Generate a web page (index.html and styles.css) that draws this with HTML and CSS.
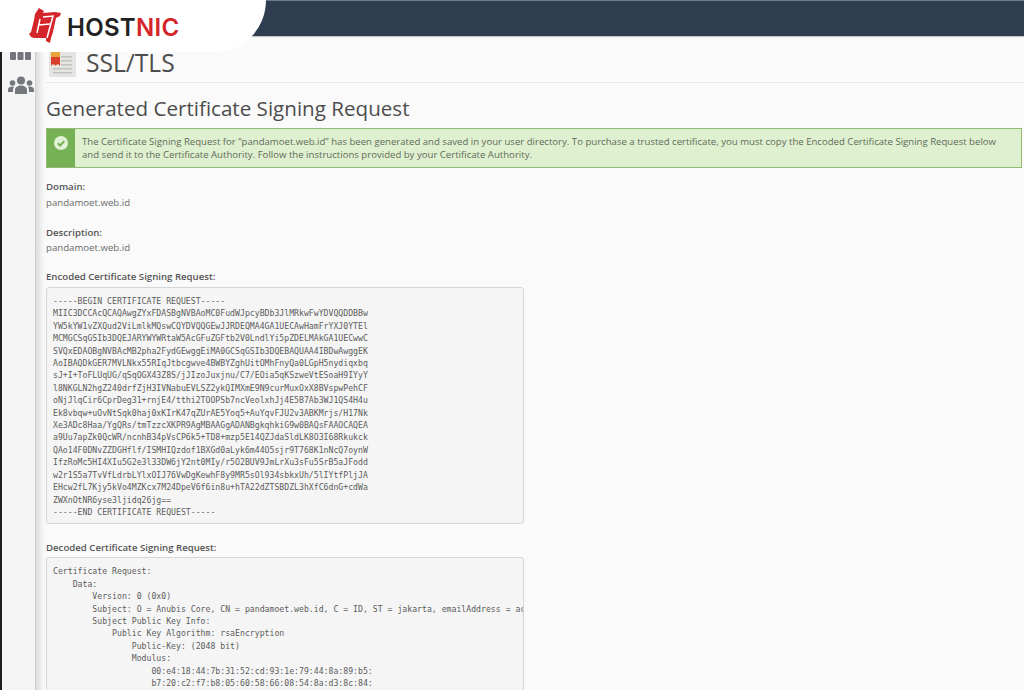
FILE: index.html
```html
<!DOCTYPE html>
<html lang="en">
<head>
<meta charset="utf-8">
<title>SSL/TLS</title>
<link rel="stylesheet" href="styles.css">
</head>
<body>
<header class="topbar">
  <div class="logo-tab">
    <svg class="logo-mark" width="34" height="35" viewBox="0 0 34 35" aria-hidden="true">
      <path fill="#d4262a" d="M10 0l5 3-1 2 12-1 6 1-1 3-4 2-3 14-2 6-1 5-4-2 0-3-12 0-3-1-2-3 2-2 3-12 1-6z"/>
      <g fill="none" stroke="#fff" stroke-width="1.500">
        <path d="M11 11l-3 14"/>
        <path d="M10 17l11-1"/>
        <path d="M14 9l10-1-6 22"/>
      </g>
    </svg>
    <span class="logo-text">HOST<span class="logo-accent">NIC</span></span>
  </div>
</header>
<div class="layout">
  <aside class="rail">
    <div class="rail-strip"></div>
    <div class="rail-icons">
      <svg width="21" height="9" viewBox="0 0 21 9" aria-hidden="true"><g fill="#74787c"><rect x="0" y="0" width="6" height="8" rx="1"/><rect x="7.500" y="0" width="6" height="8" rx="1"/><rect x="15" y="0" width="6" height="8" rx="1"/></g></svg>
      <svg width="26" height="18" viewBox="0 0 26 18" aria-hidden="true"><g fill="#74787c"><circle cx="13" cy="4.500" r="4"/><path d="M7 18v-4c0-3 3-4.500 6-4.500s6 1.500 6 4.500v4z"/><circle cx="4.500" cy="7" r="2.800"/><path d="M0 16v-2.500c0-2 2-3 4.500-3 .7 0 1.200.1 1.500.2-.6.900-1 2-1 3.300v2z"/><circle cx="21.500" cy="7" r="2.800"/><path d="M26 16v-2.500c0-2-2-3-4.500-3-.7 0-1.200.1-1.500.2.600.9 1 2 1 3.300v2z"/></g></svg>
    </div>
  </aside>
  <div class="rail-shade"></div>
  <main class="content">
    <div class="page-head">
      <svg class="page-icon" width="27" height="27" viewBox="0 0 27 27" aria-hidden="true">
        <rect width="27" height="27" fill="#e4e4e2"/>
        <g fill="#c0c2be"><rect x="12" y="6" width="11" height="1.500"/><rect x="12" y="10" width="11" height="1.500"/><rect x="12" y="14" width="11" height="1.500"/><rect x="4" y="18" width="19" height="1.500"/><rect x="4" y="22" width="19" height="1.500"/></g>
        <path fill="#d8402c" d="M2 7h9v9l-2-2-2.500 1.500-2.500-1.500-2 2z"/>
        <rect x="2" y="2" width="9" height="5" fill="#e9a23b"/>
      </svg>
      <h1 class="page-title">SSL/TLS</h1>
    </div>
    <h2 class="section-title">Generated Certificate Signing Request</h2>
    <div class="alert">
      <div class="alert-side">
        <svg width="14" height="14" viewBox="0 0 14 14" aria-hidden="true"><circle cx="7" cy="7" r="7" fill="#e2f2d6"/><path d="M3.800 7.200l2.300 2.300 4.200-4.400" fill="none" stroke="#76b255" stroke-width="2"/></svg>
      </div>
      <p class="alert-text">The Certificate Signing Request for “pandamoet.web.id” has been generated and saved in your user directory. To purchase a trusted certificate, you must copy the Encoded Certificate Signing Request below and send it to the Certificate Authority. Follow the instructions provided by your Certificate Authority.</p>
    </div>
    <div class="field">
      <div class="label">Domain:</div>
      <div class="value">pandamoet.web.id</div>
    </div>
    <div class="field">
      <div class="label">Description:</div>
      <div class="value">pandamoet.web.id</div>
    </div>
    <div class="label block-label">Encoded Certificate Signing Request:</div>
    <pre class="code">-----BEGIN CERTIFICATE REQUEST-----
MIIC3DCCAcQCAQAwgZYxFDASBgNVBAoMC0FudWJpcyBDb3JlMRkwFwYDVQQDDBBw
YW5kYW1vZXQud2ViLmlkMQswCQYDVQQGEwJJRDEQMA4GA1UECAwHamFrYXJ0YTEl
MCMGCSqGSIb3DQEJARYWYWRtaW5AcGFuZGFtb2V0LndlYi5pZDELMAkGA1UECwwC
SVQxEDAOBgNVBAcMB2pha2FydGEwggEiMA0GCSqGSIb3DQEBAQUAA4IBDwAwggEK
AoIBAQDkGER7MVLNkx55RIqJtbcgwve4BWBYZghUitOMhFnyQa0LGpH5nydiqxbq
sJ+I+ToFLUqUG/qSqOGX43Z8S/jJIzoJuxjnu/C7/EOia5qKSzweVtESoaH9IYyY
l8NKGLN2hgZ240drfZjH3IVNabuEVLSZ2ykQIMXmE9N9curMuxOxX8BVspwPehCF
oNjJlqCir6CprDeg31+rnjE4/tthi2TOOPSb7ncVeolxhJj4E5B7Ab3WJ1QS4H4u
Ek8vbqw+uOvNtSqk0haj0xKIrK47qZUrAE5Yoq5+AuYqvFJU2v3ABKMrjs/H17Nk
Xe3ADc8Haa/YgQRs/tmTzzcXKPR9AgMBAAGgADANBgkqhkiG9w0BAQsFAAOCAQEA
a9Uu7apZk0QcWR/ncnhB34pVsCP6k5+TD8+mzp5E14QZJdaSldLK8O3I68Rkukck
QAo14F0DNvZZDGHflf/ISMHIQzdof1BXGd0aLyk6m44O5sjr9T768K1nNcQ7oynW
IfzRoMc5HI4XIu5G2e3l33DW6jY2nt0MIy/r5O2BUV9JmLrXu3sFu5SrB5aJFodd
w2r1S5a7TvVfLdrbLYlxOIJ76VwDgKewhF8y9MR5sOl934sbkxUh/5lIYtfPljJA
EHcw2fL7Kjy5kVo4MZKcx7M24DpeV6f6in8u+hTA22dZTSBDZL3hXfC6dnG+cdWa
ZWXnOtNR6yse3ljidq26jg==
-----END CERTIFICATE REQUEST-----</pre>
    <div class="label block-label decoded-label">Decoded Certificate Signing Request:</div>
    <pre class="code code-open">Certificate Request:
    Data:
        Version: 0 (0x0)
        Subject: O = Anubis Core, CN = pandamoet.web.id, C = ID, ST = jakarta, emailAddress = ac
        Subject Public Key Info:
            Public Key Algorithm: rsaEncryption
                Public-Key: (2048 bit)
                Modulus:
                    00:e4:18:44:7b:31:52:cd:93:1e:79:44:8a:89:b5:
                    b7:20:c2:f7:b8:05:60:58:66:08:54:8a:d3:8c:84:</pre>
  </main>
</div>
</body>
</html>
```
FILE: styles.css
```css
* { box-sizing: border-box; }
html, body { margin: 0; height: 690px; overflow: hidden; }
body { background: #fafafa; font-family: "Open Sans", sans-serif; color: #5a5a5a; }

.topbar { display: flex; height: 36px; background: #2e3d50; border-top: 1px solid #6f7c88; position: relative; z-index: 2; box-shadow: 0 1px 1px rgba(0,0,0,.2); }
.logo-tab { position: absolute; left: 0; top: -1px; width: 266px; height: 52px; background: #fff; border-bottom-right-radius: 50px 52px; display: flex; align-items: flex-start; padding: 8px 0 0 29px; gap: 4px; }
.logo-mark { flex: none; }
.logo-text { font-family: "Inter", sans-serif; font-weight: 600; font-size: 24px; line-height: 39px; letter-spacing: .3px; color: #222; }
.logo-accent { color: #d4262a; }

.layout { display: flex; height: 654px; overflow: hidden; }
.rail { flex: none; width: 36px; display: flex; background: #f5f5f5; border-right: 1px solid #cfcfcf; }
.rail-strip { flex: none; width: 2px; background: #1d1d1d; }
.rail-icons { flex: 1; display: flex; flex-direction: column; align-items: center; gap: 15px; padding: 16px 0 0 4px; }
.rail-shade { flex: none; width: 10px; background: linear-gradient(to right, #dcdcdc, #f6f6f6 70%, #fafafa); }

.content { flex: 1; min-width: 0; height: 654px; overflow: hidden; padding-right: 2px; }
.page-head { display: flex; align-items: center; gap: 10px; height: 47px; padding: 8px 0 0 3px; border-bottom: 1px solid #e8e8e8; margin-right: -2px; }
.page-icon { flex: none; }
.page-title { margin: 0; font-weight: 400; font-size: 24.600px; line-height: 34px; color: #4d4d4d; }
.section-title { margin: 11px 0 0; font-weight: 400; font-size: 20.600px; line-height: 29px; color: #4d4d4d; }

.alert { display: flex; margin-top: 5px; height: 40px; background: #dff0d0; border: 1px solid #8fbc72; }
.alert-side { flex: none; width: 28px; background: #76b255; display: flex; justify-content: center; padding-top: 7px; }
.alert-text { margin: 0; padding: 6px 10px 0 7px; font-size: 9.600px; line-height: 13px; color: #5f6b5a; }

.field { margin-top: 12px; }
.field + .field { margin-top: 16px; }
.label { font-size: 9.650px; line-height: 14px; font-weight: 600; color: #555; }
.value { margin-top: 1.500px; font-size: 9.650px; line-height: 14px; color: #6a6a6a; }
.block-label { margin-top: 15px; }
.decoded-label { margin-top: 17px; }

.code { margin: 3px 0 0; width: 478px; padding: 7px 0 5px 6px; background: #f5f5f5; border: 1px solid #d6d6d6; border-radius: 3px; font-family: "DejaVu Sans Mono", monospace; font-size: 8.190px; line-height: 12.400px; color: #5c5c5c; overflow: hidden; white-space: pre; }
.code-open { height: 200px; margin-top: 2px; }
```
